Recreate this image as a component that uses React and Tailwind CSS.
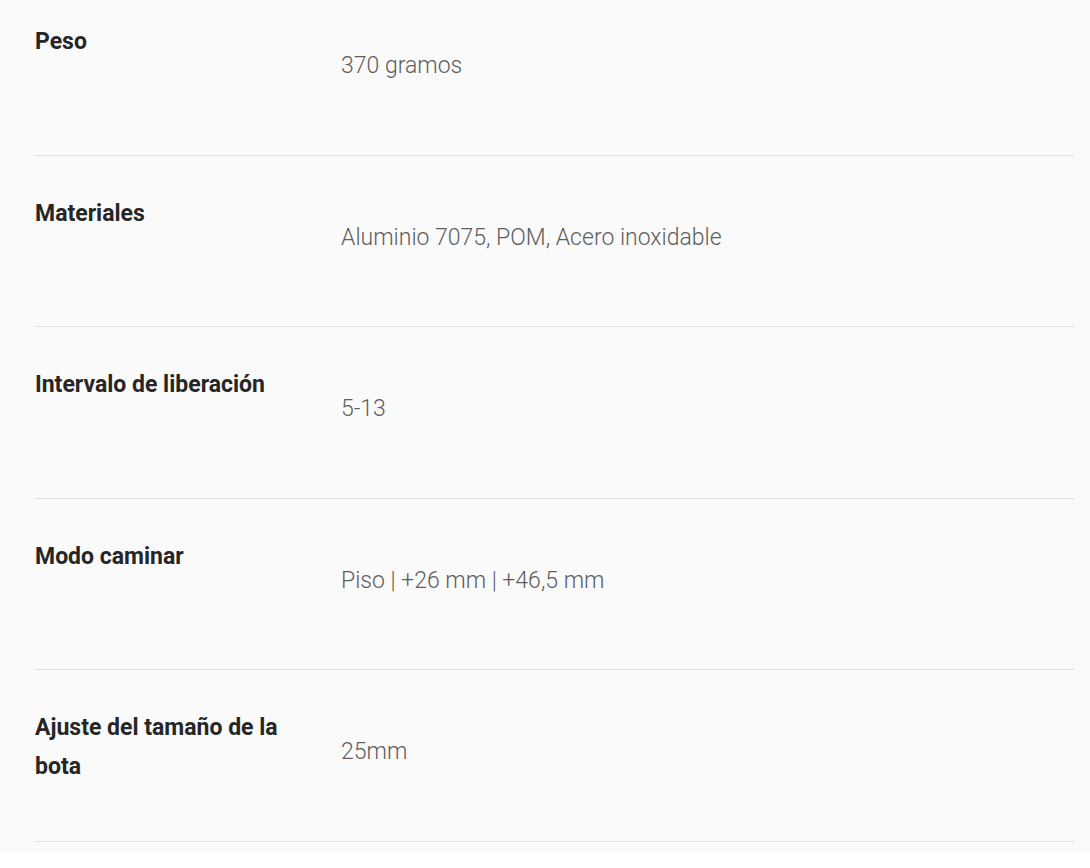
const specs = [
  { label: "Peso", value: "370 gramos" },
  { label: "Materiales", value: "Aluminio 7075, POM, Acero inoxidable" },
  { label: "Intervalo de liberación", value: "5-13" },
  { label: "Modo caminar", value: "Piso | +26 mm | +46,5 mm" },
  { label: "Ajuste del tamaño de la bota", value: "25mm" },
];

export default function App() {
  return (
    <div
      className="min-h-screen bg-[#fafafa] pl-[35px] pr-[16px]"
      style={{ fontFamily: "Roboto, 'Liberation Sans', sans-serif" }}
    >
      <div className="-mt-[16px]">
        {specs.map((s) => (
          <div
            key={s.label}
            className="grid h-[171.5px] grid-cols-[306px_1fr] border-b border-[#e0e0e0] pt-[38px]"
          >
            <div className="pr-[18px] text-[23px] font-bold leading-[39px] text-[#262626]">
              {s.label}
            </div>
            <div className="mt-[24px] text-[23px] font-light leading-[39px] text-[#5e5e5e]">
              {s.value}
            </div>
          </div>
        ))}
      </div>
    </div>
  );
}
